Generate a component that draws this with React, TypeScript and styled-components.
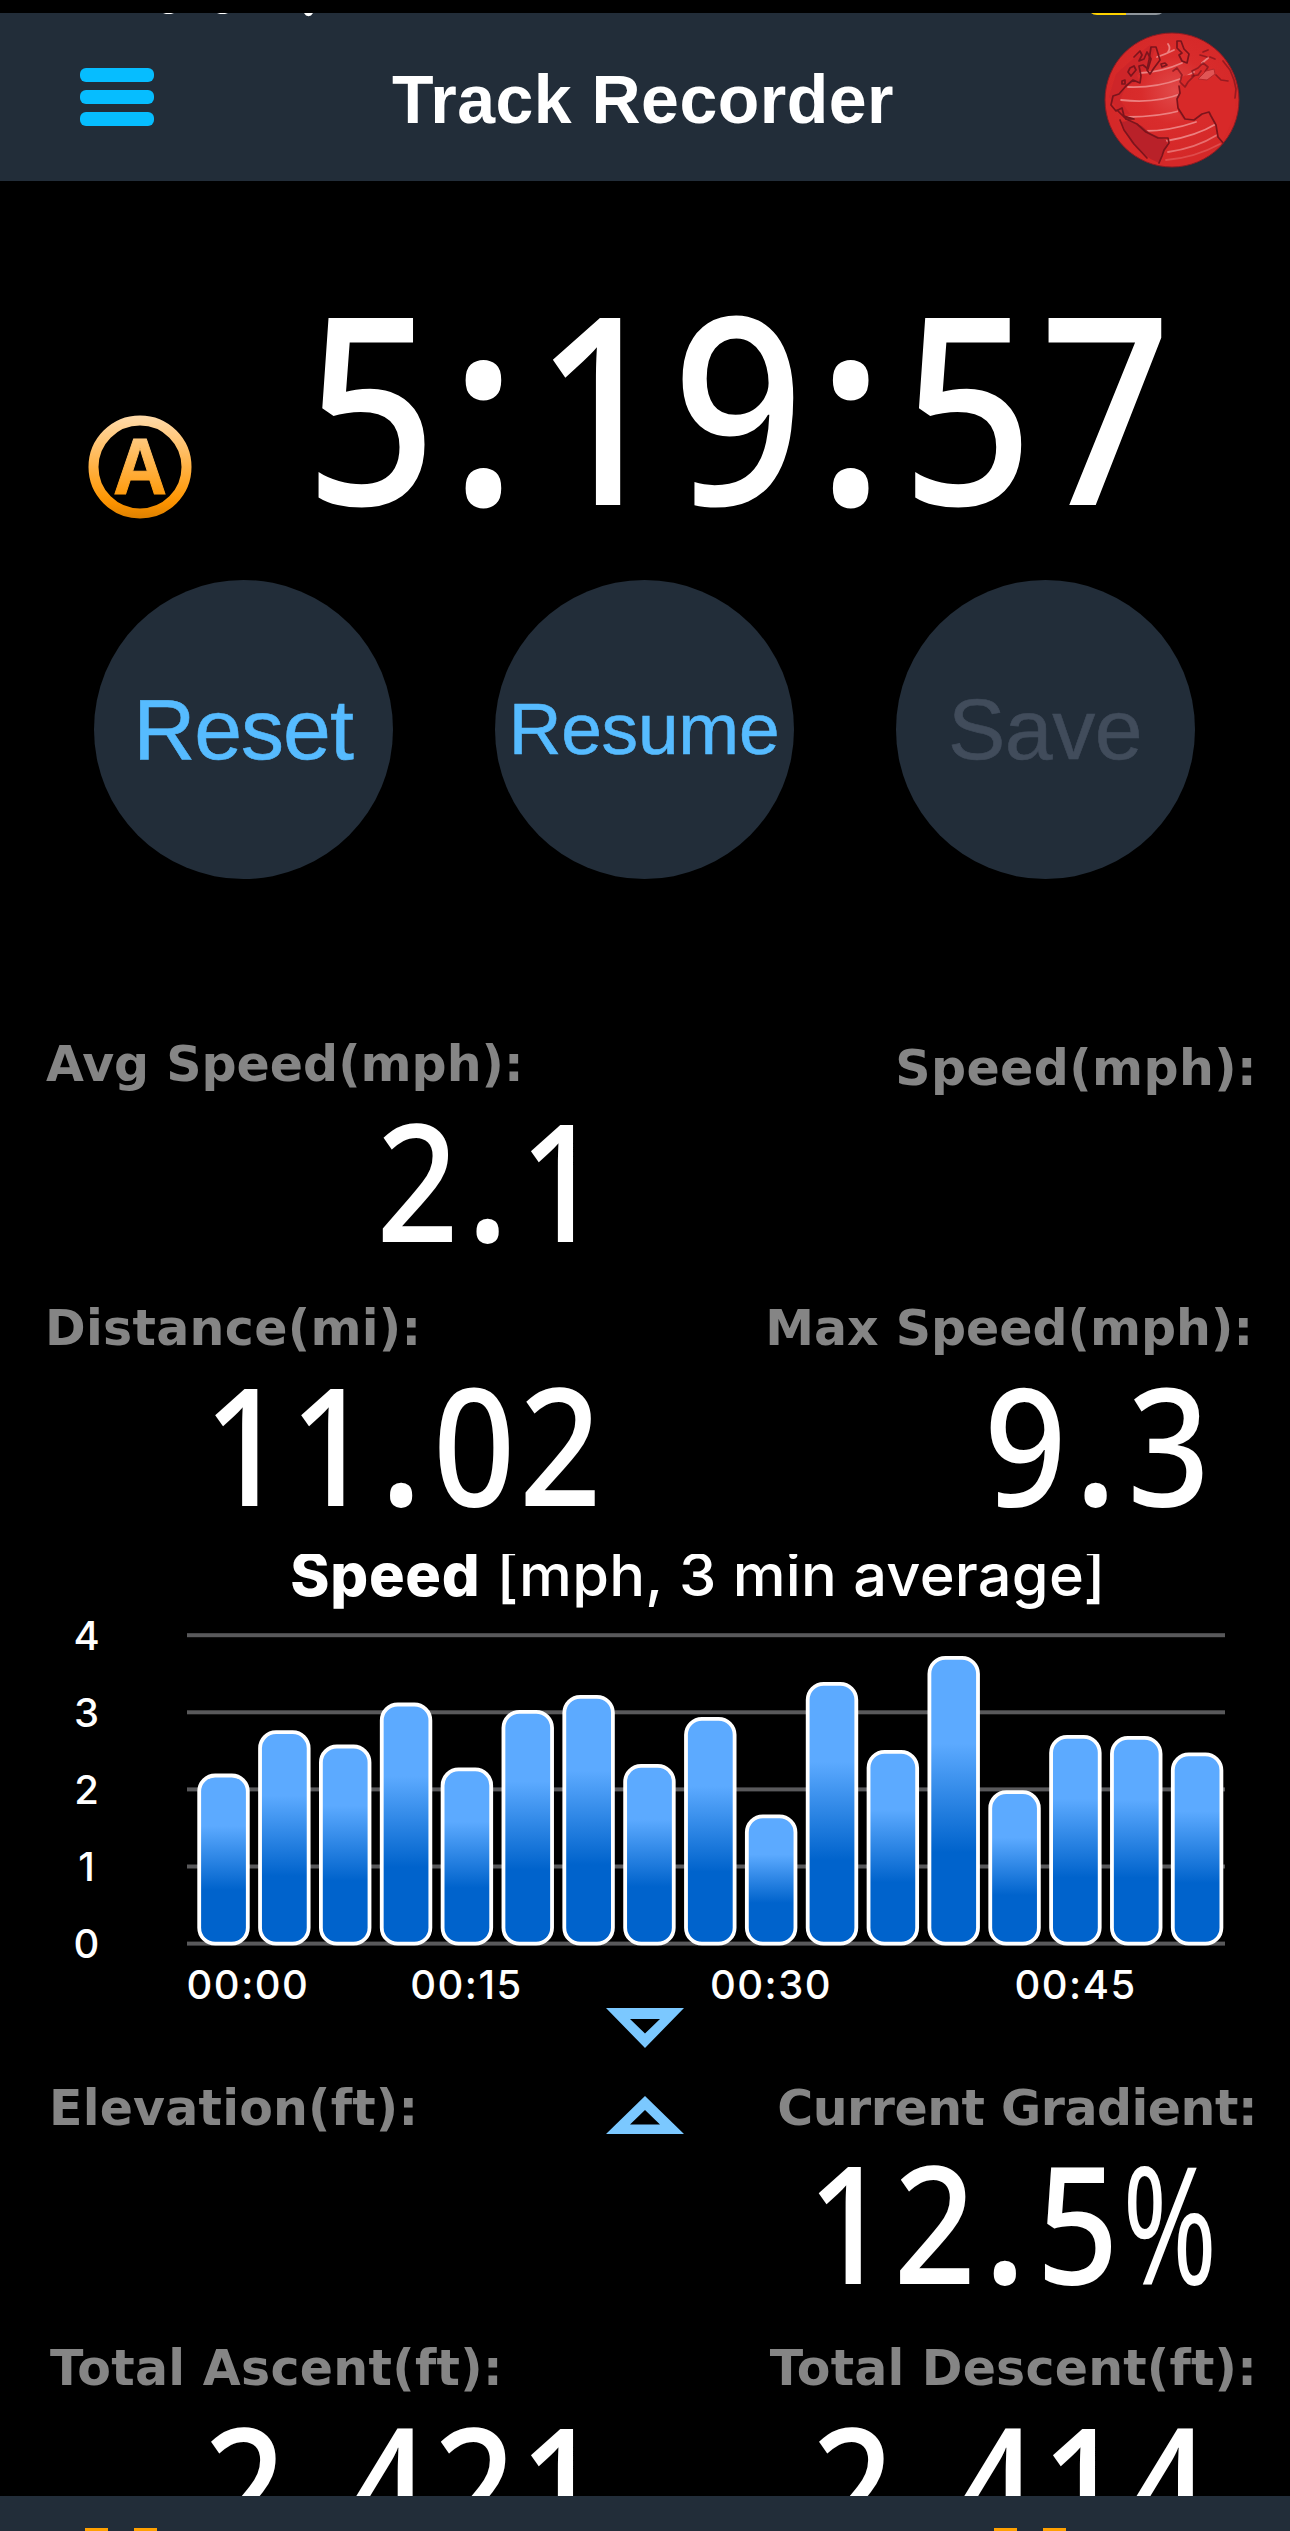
import React from "react";
import styled, { createGlobalStyle } from "styled-components";

const slate = "#222d39";

const GlobalStyle = createGlobalStyle`
  * { box-sizing: border-box; }
  html, body { margin: 0; padding: 0; background: #000; }
`;

const Page = styled.main`
  display: flex;
  flex-direction: column;
  width: 1290px;
  height: 2531px;
  overflow: hidden;
  background: #000;
  color: #fff;
  font-family: "Liberation Sans", Arial, sans-serif;
`;

const Header = styled.header`
  position: relative;
  flex: none;
  display: grid;
  grid-template-columns: 200px 1fr 200px;
  align-items: center;
  height: 168px;
  margin-top: 13px;
  background: ${slate};
`;

const StatusRemnants = styled.svg`
  position: absolute;
  top: 0;
  left: 0;
`;

const MenuButton = styled.button`
  display: flex;
  flex-direction: column;
  gap: 8px;
  width: 74px;
  margin: 0 0 0 80px;
  padding: 0;
  border: 0;
  background: none;
`;

const MenuLine = styled.span`
  height: 14px;
  border-radius: 6px;
  background: #06bdff;
`;

const Title = styled.h1`
  margin: 4px 0 0;
  font-size: 68px;
  line-height: 80px;
  font-weight: 700;
  letter-spacing: 0.5px;
  text-align: center;
  padding-right: 4px;
  white-space: nowrap;
`;

const GlobeButton = styled.button`
  width: 136px;
  height: 136px;
  margin: 6px 0 0 14px;
  padding: 0;
  border: 0;
  background: none;
`;

const TimerSection = styled.section`
  flex: none;
  display: flex;
  height: 398px;
  padding: 92px 0 0 88px;
`;

const AutoBadge = styled.svg`
  flex: none;
  margin: 141px 112px 0 0;
`;

const Numerals = styled.div<{ $size: number; $origin: "left" | "right" }>`
  flex: none;
  font-family: "Noto Sans", "Open Sans", sans-serif;
  font-weight: 500;
  font-size: ${(p) => p.$size}px;
  line-height: 1;
  letter-spacing: 0.026em;
  margin-right: ${(p) => (p.$origin === "right" ? -2 : 0)}px;
  white-space: nowrap;
  transform: scaleX(0.88);
  transform-origin: ${(p) => p.$origin} center;
`;

const Mark = styled.span`
  padding: 0 0.057em 0 0.038em;
  font-weight: 650;
`;

const Percent = styled.span`
  display: inline-block;
  width: 0.63em;
  font-weight: 400;
  transform: scaleX(0.79);
  transform-origin: left center;
`;

const ButtonRow = styled.section`
  flex: none;
  display: flex;
  gap: 102px;
  height: 455px;
  padding: 0.5px 0 0 93.5px;
`;

const RoundButton = styled.button<{ $size: number; $track: number; $dim?: boolean }>`
  width: 299px;
  height: 299px;
  padding: 0 0 1px;
  border: 0;
  border-radius: 50%;
  background: ${slate};
  color: ${(p) => (p.$dim ? "#414c5b" : "#56bbff")};
  font-family: "Liberation Sans", Arial, sans-serif;
  font-size: ${(p) => p.$size}px;
  letter-spacing: ${(p) => p.$track}px;
  line-height: 1;
  -webkit-text-stroke: 0.6px currentColor;
`;

const StatRow = styled.section<{ $height: number }>`
  flex: none;
  display: grid;
  grid-template-columns: 603px 1fr;
  height: ${(p) => p.$height}px;
`;

const Stat = styled.div<{ $right?: boolean; $gap?: number; $drop?: number }>`
  display: flex;
  flex-direction: column;
  align-items: flex-end;
  gap: ${(p) => p.$gap ?? 1.8}px;
  padding-top: ${(p) => (p.$drop ?? 0) + 0.8}px;
  padding-right: ${(p) => (p.$right ? 79 : 0)}px;
`;

const Label = styled.div<{ $indent?: number; $outdent?: number; $track?: number }>`
  align-self: ${(p) => (p.$indent ? "flex-start" : "flex-end")};
  margin-left: ${(p) => p.$indent ?? 0}px;
  margin-right: ${(p) => -(p.$outdent ?? 0)}px;
  font-family: "DejaVu Sans", Verdana, sans-serif;
  font-weight: 700;
  font-size: 49px;
  line-height: 60px;
  letter-spacing: ${(p) => p.$track ?? 0.2}px;
  color: #858585;
  white-space: nowrap;
`;

const ChartTitle = styled.h2`
  flex: none;
  height: 56px;
  margin: 0;
  padding-left: 106px;
  overflow: hidden;
  font-family: Inter, sans-serif;
  font-size: 59.5px;
  line-height: 41px;
  font-weight: 550;
  letter-spacing: 0.25px;
  text-align: center;
  white-space: nowrap;
`;

const Strong = styled.b`
  font-weight: 800;
  letter-spacing: 0.7px;
`;

const Chart = styled.svg`
  flex: none;
  display: block;
`;

const Arrow = styled.svg<{ $gap: number }>`
  flex: none;
  display: block;
  margin: 0 0 ${(p) => p.$gap}px 606px;
`;

const GradientRow = styled.section`
  flex: none;
  display: grid;
  grid-template-columns: 606px 78px 606px;
  height: 260px;
`;

const MiddleArrow = styled.svg`
  margin-top: 18px;
`;

const LastRow = styled(StatRow)`
  overflow: hidden;
`;

const TabBar = styled.footer`
  flex: none;
  display: flex;
  align-items: flex-end;
  height: 35px;
  background: ${slate};
`;

const TabIcon = styled.div<{ $offset: number }>`
  display: flex;
  gap: 26px;
  margin-left: ${(p) => p.$offset}px;
`;

const TabStub = styled.span`
  width: 23px;
  height: 3px;
  background: #ffa000;
`;

function Digits({ value, size, origin = "right" }: { value: string; size: number; origin?: "left" | "right" }) {
  return (
    <Numerals $size={size} $origin={origin}>
      {value.split(/([:.,%])/).map((part, i) =>
        part === "%" ? <Percent key={i}>%</Percent> : /[:.,]/.test(part) ? <Mark key={i}>{part}</Mark> : part
      )}
    </Numerals>
  );
}

function Globe() {
  return (
    <svg width="136" height="136" viewBox="0 0 136 136">
      <defs>
        <radialGradient id="sea" cx="0.52" cy="0.43" r="0.5">
          <stop offset="0" stopColor="#e14a4a" />
          <stop offset="0.5" stopColor="#d92c2c" />
          <stop offset="1" stopColor="#d52828" />
        </radialGradient>
        <clipPath id="disc"><circle cx="68" cy="68" r="67" /></clipPath>
      </defs>
      <circle cx="68" cy="68" r="67" fill="url(#sea)" stroke="#8e1b22" strokeWidth="1" />
      <g clipPath="url(#disc)">
        <g fill="none" stroke="#ec8080" strokeWidth="1.8" strokeLinecap="round">
          <path d="M53 25Q62 22 70 18" />
          <path d="M36 41Q58 40 78 31" />
          <path d="M24 55Q52 56 76 47" />
          <path d="M17 68Q52 72 79 61" />
          <path d="M24 85Q54 85 79 78" />
          <path d="M40 99Q66 99 92 90" />
          <path d="M62 109Q92 104 112 92" />
          <path d="M64 120Q92 116 113 103" opacity="0.8" />
          <path d="M62 128Q90 126 116 112" opacity="0.4" />
          <path d="M83 44L90 40M98 31L104 26M64 12Q67 16 64 20" />
        </g>
        <path d="M77 47Q79 43 85 43L93 41L101 46L118 45L130 56L132 80L118 111L113 105L112 91L106 80L98 80L88 88L79 87L74 80L74 68Z" fill="#d82929" />
        <path d="M17 90L24 89L38 94L46 101L62 108L64 114L58 122L55 131Q38 124 27 110Z" fill="#b92129" />
        <path d="M37 20L46 13L51 17L45 35L33 43L35 49L22 54L16 68L26 82L17 82L5 65L12 42Z" fill="#c92429" opacity="0.65" />
        <g fill="none" stroke="#7c141c" strokeWidth="1.7" strokeLinejoin="round" strokeLinecap="round">
          <path d="M30 25L36 19L38 23L35 29L40 27L43 20L47 27L44 37L39 33L35 34L37 44L36 51L29 48L22 54L15 62L9 64L7 73L12 79L18 76L20 84L30 87L22 87L13 78" />
          <path d="M47 15L52 15L56 28L50 36L46 42L43 38L45 28Z" />
          <path d="M26 36L30 34L32 38L27 44L24 40ZM18 49l3-1v4h-3zM57 32l4-1 2 2-5 2z" />
          <path d="M73 9L77 9L80 17L85 22L83 31L78 29L75 23L78 21L73 16Z" />
          <path d="M69 39L73 36L78 43L76 50L81 55L84 50L90 44L88 39L94 36L99 31L104 35L101 40" opacity="0.7" />
          <path d="M75 54L76 61L73 67L74 76L81 87L90 88L98 82L105 80L107 84L112 93L114 105L120 112" />
          <path d="M96 23l7 2M99 20l5-2M106 25l5 2M88 44l6-1 3-4M112 43L117 48L124 49M119 29L126 38L130 48L132 57L131 66" opacity="0.7" />
          <path d="M16 88L20 98L30 112L43 126M22 87L33 92L42 100L54 106L64 106L65 111L60 118L58 124L55 131" />
        </g>
        <path d="M94 47L102 39L110 37L111 42L103 48Z" fill="#e05555" stroke="#b8282c" />
      </g>
    </svg>
  );
}

const barTops = [1773.7, 1730.4, 1744.7, 1702.7, 1767.6, 1710, 1695, 1764, 1717, 1814.5, 1682, 1750, 1656, 1790.4, 1735, 1736, 1752.5];
const chartTop = 1610;
const gridLines = [4, 3, 2, 1, 0];
const ticks = [
  { x: 248, text: "00:00" },
  { x: 466.5, text: "00:15" },
  { x: 771, text: "00:30" },
  { x: 1075.5, text: "00:45" },
];

function SpeedChart() {
  return (
    <Chart width="1290" height="398" viewBox={`0 ${chartTop} 1290 398`}>
      <defs>
        <linearGradient id="bar" x1="0" y1="0" x2="0" y2="1">
          <stop offset="0.3" stopColor="#5caaff" />
          <stop offset="0.68" stopColor="#0063cc" />
        </linearGradient>
      </defs>
      {gridLines.map((n) => (
        <g key={n}>
          <rect x="187" y={1941.6 - n * 77.1} width="1038" height="4" fill="#59595b" />
          <text x="86.5" y={1958 - n * 77.1} fill="#fff" fontFamily="Inter, sans-serif" fontSize="40" fontWeight="550" textAnchor="middle">{n}</text>
        </g>
      ))}
      {barTops.map((top, i) => (
        <rect key={i} x={199.2 + i * 60.85} y={top + 1.8} width="48.6" height={1943.7 - top - 1.8} rx="16" fill="url(#bar)" stroke="#fff" strokeWidth="3.800" />
      ))}
      {ticks.map((t) => (
        <text key={t.text} x={t.x} y="1999" fill="#fff" fontFamily="Inter, sans-serif" fontSize="40" fontWeight="550" letterSpacing="1.5" textAnchor="middle">{t.text}</text>
      ))}
    </Chart>
  );
}

export default function App() {
  return (
    <Page>
      <GlobalStyle />
      <Header>
        <StatusRemnants width="1290" height="4">
          <path d="M163 0h11l-3 1h-5zM217 0h11l-3 1h-5zM304 0h9l-2 2.5-2.500.8-2.500-.8z" fill="#fff" />
          <path d="M1091 0h35v2h-29q-4 0-6-2z" fill="#ffd200" />
          <path d="M1126 0h36q-2 2-6 2h-30z" fill="#8f969c" />
        </StatusRemnants>
        <MenuButton aria-label="Menu"><MenuLine /><MenuLine /><MenuLine /></MenuButton>
        <Title>Track Recorder</Title>
        <GlobeButton aria-label="Globe"><Globe /></GlobeButton>
      </Header>
      <TimerSection>
        <AutoBadge width="105" height="105" viewBox="0 0 105 105">
          <defs>
            <linearGradient id="amber" gradientUnits="userSpaceOnUse" x1="0" y1="0" x2="0" y2="105">
              <stop offset="0" stopColor="#ffdcae" />
              <stop offset="0.78" stopColor="#ff9a0a" />
              <stop offset="0.85" stopColor="#fb9200" />
              <stop offset="1" stopColor="#dc8000" />
            </linearGradient>
          </defs>
          <circle cx="52" cy="53" r="46.500" fill="none" stroke="url(#amber)" strokeWidth="10" />
          <text x="52" y="79.500" textAnchor="middle" fontFamily="Liberation Sans, Arial, sans-serif" fontWeight="700" fontSize="80" textLength="54" lengthAdjust="spacingAndGlyphs" fill="url(#amber)" stroke="url(#amber)" strokeWidth="1">A</text>
        </AutoBadge>
        <Digits value="5:19:57" size={262} origin="left" />
      </TimerSection>
      <ButtonRow>
        <RoundButton $size={86} $track={-1}>Reset</RoundButton>
        <RoundButton $size={73} $track={-0.2}>Resume</RoundButton>
        <RoundButton $size={86} $track={-0.5} $dim disabled>Save</RoundButton>
      </ButtonRow>
      <StatRow $height={264}>
        <Stat>
          <Label $indent={46} $track={0}>Avg Speed(mph):</Label>
          <Digits value="2.1" size={163.5} />
        </Stat>
        <Stat $right $drop={4}>
          <Label $outdent={46} $track={0.4}>Speed(mph):</Label>
        </Stat>
      </StatRow>
      <StatRow $height={256}>
        <Stat>
          <Label $indent={45} $track={0.3}>Distance(mi):</Label>
          <Digits value="11.02" size={163.5} />
        </Stat>
        <Stat $right>
          <Label $outdent={42} $track={0}>Max Speed(mph):</Label>
          <Digits value="9.3" size={163.5} />
        </Stat>
      </StatRow>
      <ChartTitle><Strong>Speed</Strong> [mph, 3 min average]</ChartTitle>
      <SpeedChart />
      <Arrow $gap={30} width="78" height="40" viewBox="0 0 78 40">
        <path fillRule="evenodd" d="M0 0H78L39 40ZM24 11L39 25.500L54 11Z" fill="#7bc8ff" />
      </Arrow>
      <GradientRow>
        <Stat>
          <Label $indent={49}>Elevation(ft):</Label>
        </Stat>
        <MiddleArrow width="78" height="38" viewBox="0 0 78 38">
          <path fillRule="evenodd" d="M39 0L78 38H0ZM39 14L54 28.500H24Z" fill="#7bc8ff" />
        </MiddleArrow>
        <Stat $right $gap={-3.6}>
          <Label $outdent={46} $track={-0.5}>Current Gradient:</Label>
          <Digits value="12.5%" size={163.5} />
        </Stat>
      </GradientRow>
      <LastRow $height={158}>
        <Stat>
          <Label $indent={50} $track={0.3}>Total Ascent(ft):</Label>
          <Digits value="2,421" size={163.5} />
        </Stat>
        <Stat $right>
          <Label $outdent={46}>Total Descent(ft):</Label>
          <Digits value="2,414" size={163.5} />
        </Stat>
      </LastRow>
      <TabBar>
        <TabIcon $offset={85}><TabStub /><TabStub /></TabIcon>
        <TabIcon $offset={837}><TabStub /><TabStub /></TabIcon>
      </TabBar>
    </Page>
  );
}
